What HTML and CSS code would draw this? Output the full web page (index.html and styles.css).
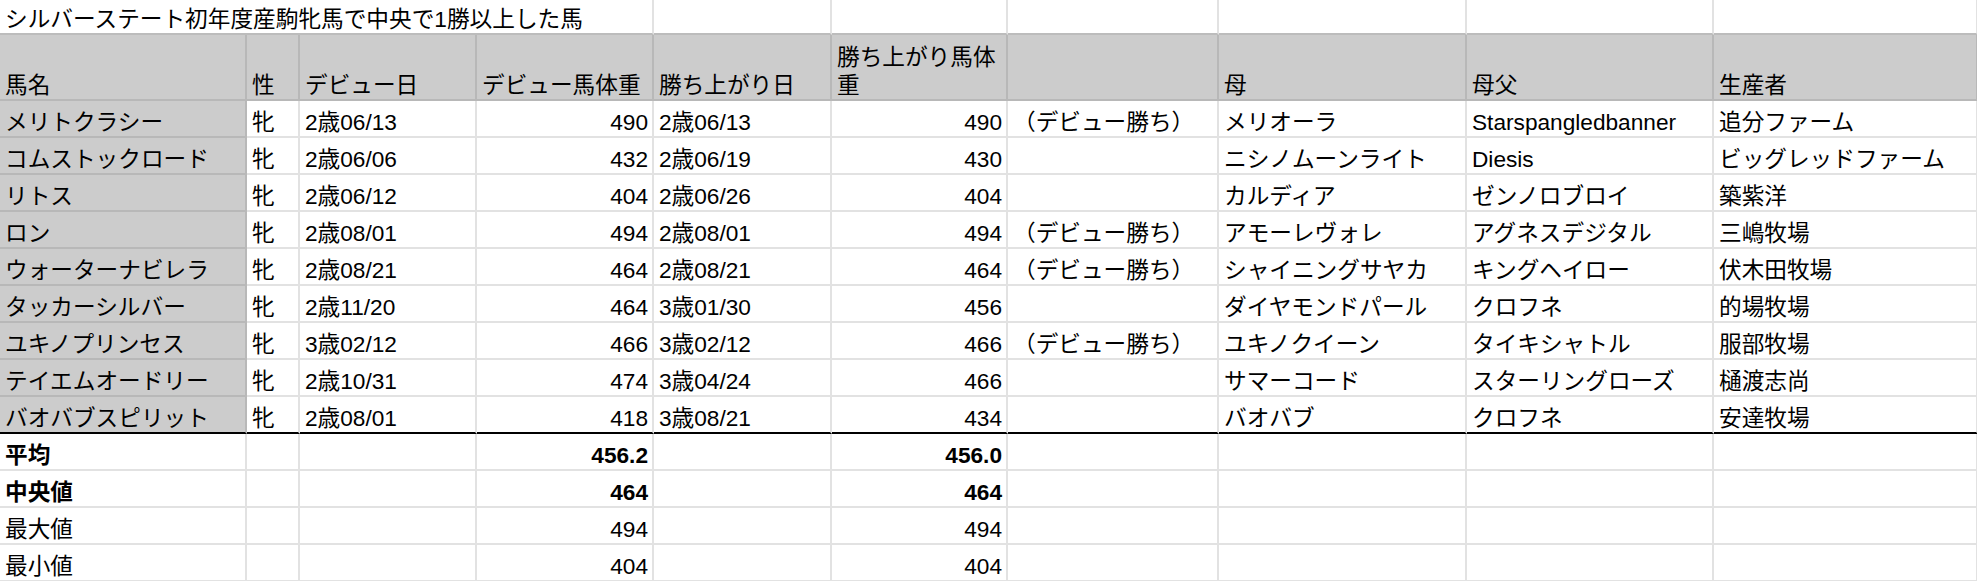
FILE: index.html
```html
<!DOCTYPE html>
<html lang="ja">
<head>
<meta charset="utf-8">
<title>シルバーステート初年度産駒牝馬</title>
<link rel="stylesheet" href="styles.css">
</head>
<body>
<div class="sheet">
  <div class="c t span4">シルバーステート初年度産駒牝馬で中央で1勝以上した馬</div>
  <div class="c t"></div><div class="c t"></div><div class="c t"></div><div class="c t"></div><div class="c t"></div><div class="c t"></div>

  <div class="c h">馬名</div><div class="c h">性</div><div class="c h">デビュー日</div><div class="c h">デビュー馬体重</div><div class="c h">勝ち上がり日</div><div class="c h wrap">勝ち上がり馬体重</div><div class="c h"></div><div class="c h">母</div><div class="c h">母父</div><div class="c h">生産者</div>

  <div class="c n">メリトクラシー</div><div class="c">牝</div><div class="c">2歳06/13</div><div class="c r">490</div><div class="c">2歳06/13</div><div class="c r">490</div><div class="c">（デビュー勝ち）</div><div class="c">メリオーラ</div><div class="c">Starspangledbanner</div><div class="c">追分ファーム</div>

  <div class="c n">コムストックロード</div><div class="c">牝</div><div class="c">2歳06/06</div><div class="c r">432</div><div class="c">2歳06/19</div><div class="c r">430</div><div class="c"></div><div class="c">ニシノムーンライト</div><div class="c">Diesis</div><div class="c">ビッグレッドファーム</div>

  <div class="c n">リトス</div><div class="c">牝</div><div class="c">2歳06/12</div><div class="c r">404</div><div class="c">2歳06/26</div><div class="c r">404</div><div class="c"></div><div class="c">カルディア</div><div class="c">ゼンノロブロイ</div><div class="c">築紫洋</div>

  <div class="c n">ロン</div><div class="c">牝</div><div class="c">2歳08/01</div><div class="c r">494</div><div class="c">2歳08/01</div><div class="c r">494</div><div class="c">（デビュー勝ち）</div><div class="c">アモーレヴォレ</div><div class="c">アグネスデジタル</div><div class="c">三嶋牧場</div>

  <div class="c n">ウォーターナビレラ</div><div class="c">牝</div><div class="c">2歳08/21</div><div class="c r">464</div><div class="c">2歳08/21</div><div class="c r">464</div><div class="c">（デビュー勝ち）</div><div class="c">シャイニングサヤカ</div><div class="c">キングヘイロー</div><div class="c">伏木田牧場</div>

  <div class="c n">タッカーシルバー</div><div class="c">牝</div><div class="c">2歳11/20</div><div class="c r">464</div><div class="c">3歳01/30</div><div class="c r">456</div><div class="c"></div><div class="c">ダイヤモンドパール</div><div class="c">クロフネ</div><div class="c">的場牧場</div>

  <div class="c n">ユキノプリンセス</div><div class="c">牝</div><div class="c">3歳02/12</div><div class="c r">466</div><div class="c">3歳02/12</div><div class="c r">466</div><div class="c">（デビュー勝ち）</div><div class="c">ユキノクイーン</div><div class="c">タイキシャトル</div><div class="c">服部牧場</div>

  <div class="c n">テイエムオードリー</div><div class="c">牝</div><div class="c">2歳10/31</div><div class="c r">474</div><div class="c">3歳04/24</div><div class="c r">466</div><div class="c"></div><div class="c">サマーコード</div><div class="c">スターリングローズ</div><div class="c">樋渡志尚</div>

  <div class="c n last">バオバブスピリット</div><div class="c last">牝</div><div class="c last">2歳08/01</div><div class="c r last">418</div><div class="c last">3歳08/21</div><div class="c r last">434</div><div class="c last"></div><div class="c last">バオバブ</div><div class="c last">クロフネ</div><div class="c last">安達牧場</div>

  <div class="c b">平均</div><div class="c"></div><div class="c"></div><div class="c r b">456.2</div><div class="c"></div><div class="c r b">456.0</div><div class="c"></div><div class="c"></div><div class="c"></div><div class="c"></div>

  <div class="c b">中央値</div><div class="c"></div><div class="c"></div><div class="c r b">464</div><div class="c"></div><div class="c r b">464</div><div class="c"></div><div class="c"></div><div class="c"></div><div class="c"></div>

  <div class="c">最大値</div><div class="c"></div><div class="c"></div><div class="c r">494</div><div class="c"></div><div class="c r">494</div><div class="c"></div><div class="c"></div><div class="c"></div><div class="c"></div>

  <div class="c">最小値</div><div class="c"></div><div class="c"></div><div class="c r">404</div><div class="c"></div><div class="c r">404</div><div class="c"></div><div class="c"></div><div class="c"></div><div class="c"></div>
</div>
</body>
</html>
```
FILE: styles.css
```css
html, body {
  margin: 0;
  padding: 0;
  background: #ffffff;
}

body {
  font-family: "Liberation Sans", Arial, "Noto Sans CJK JP", sans-serif;
  font-size: 22.67px;
  color: #000000;
  overflow: hidden;
}

.sheet {
  display: grid;
  grid-template-columns: 247px 53px 177px 177px 178px 176px 211px 248px 247px 264px;
  grid-template-rows: 35px 66px repeat(13, 37px);
  width: 1978px;
}

.c {
  box-sizing: border-box;
  display: flex;
  align-items: flex-end;
  padding: 0 5px 0 5px;
  line-height: 28px;
  white-space: nowrap;
  overflow: hidden;
  border-right: 2px solid #e2e2e2;
  border-bottom: 2px solid #e2e2e2;
  min-width: 0;
}

.t {
  border-bottom: 2px solid #bcbcbc;
}

.span4 {
  grid-column: span 4;
  overflow: visible;
}

.h {
  background: #cccccc;
  border-right: 2px solid #b8b8b8;
  border-bottom: 2px solid #b8b8b8;
}

.wrap {
  white-space: normal;
}

.n {
  background: #cccccc;
  border-right: 2px solid #b8b8b8;
  border-bottom: 2px solid #b8b8b8;
}

.r {
  justify-content: flex-end;
  padding-right: 4px;
}

.b {
  font-weight: bold;
}

.last {
  border-bottom: 2px solid #000000;
}
```
